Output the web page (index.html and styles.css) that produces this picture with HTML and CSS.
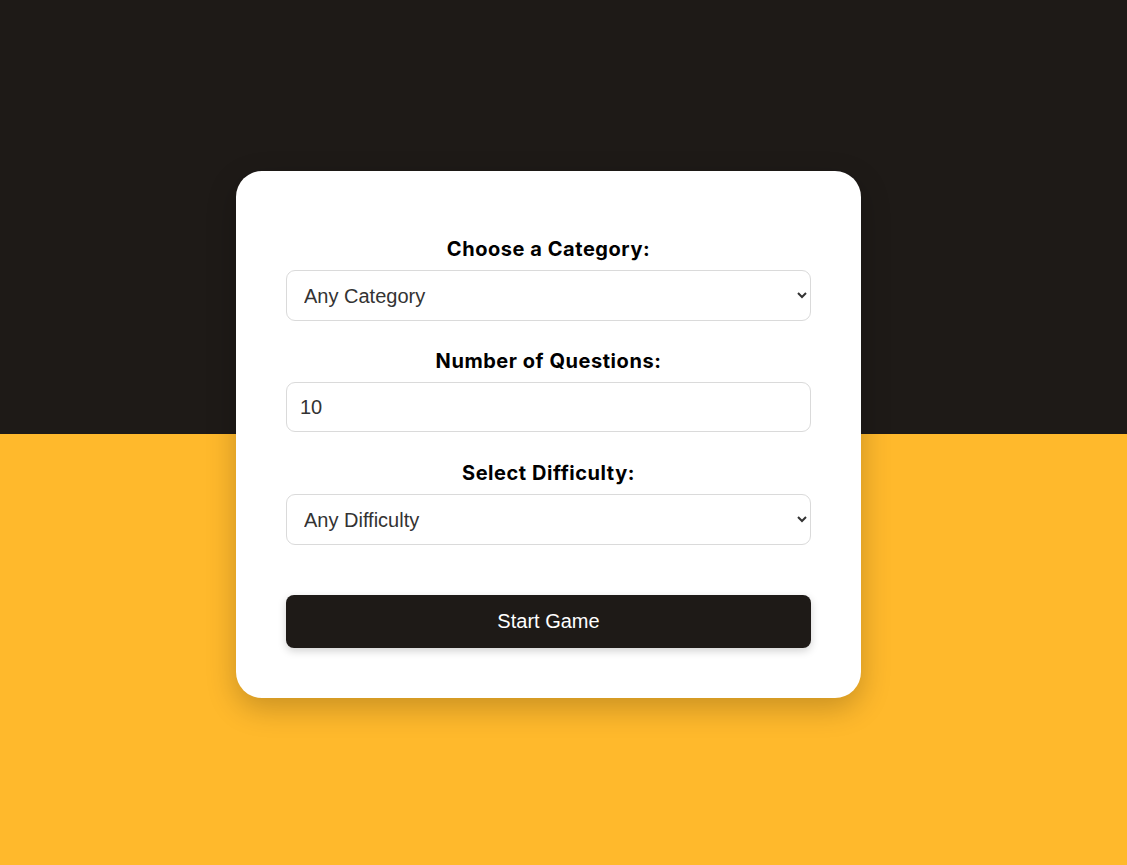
FILE: index.html
```html
<!DOCTYPE html>
<html lang="en">
<head>
<meta charset="utf-8">
<title>Quiz Setup</title>
<link rel="stylesheet" href="styles.css">
</head>
<body>
<div class="page">
  <div class="bg-top"></div>
  <div class="bg-bottom"></div>
  <main class="card">
    <form class="setup">
      <div class="group">
        <label class="label" for="category">Choose a Category:</label>
        <select class="field select" id="category">
          <option>Any Category</option>
        </select>
      </div>
      <div class="group group-number">
        <label class="label" for="amount">Number of Questions:</label>
        <input class="field input" id="amount" type="number" value="10">
      </div>
      <div class="group group-last">
        <label class="label" for="difficulty">Select Difficulty:</label>
        <select class="field select" id="difficulty">
          <option>Any Difficulty</option>
        </select>
      </div>
      <button class="start" type="button">Start Game</button>
    </form>
  </main>
</div>
</body>
</html>
```
FILE: styles.css
```css
* { box-sizing: border-box; }
html, body { margin: 0; padding: 0; }
body {
  font-family: "Liberation Sans", Arial, sans-serif;
  width: 1127px;
  height: 865px;
  overflow: hidden;
}
.page {
  position: relative;
  width: 1127px;
  height: 865px;
  display: flex;
  flex-direction: column;
}
.bg-top { height: 434px; background: #1e1a17; }
.bg-bottom { flex: 1; background: #ffb92c; }
.card {
  position: absolute;
  left: 236px;
  top: 171px;
  width: 625px;
  background: #fff;
  border-radius: 26px;
  padding: 65px 50px 50px;
  box-shadow: 0 10px 30px rgba(0, 0, 0, 0.22);
}
.setup { display: flex; flex-direction: column; }
.group { display: flex; flex-direction: column; margin-bottom: 27px; }
.group-number { margin-bottom: 28px; }
.group-last { margin-bottom: 50px; }
.label {
  font-family: "Inter", "Noto Sans", sans-serif;
  font-weight: 700;
  font-size: 20px;
  line-height: 26px;
  letter-spacing: 0.55px;
  color: #000;
  text-align: center;
  margin-bottom: 8px;
}
.field {
  width: 525px;
  height: 51px;
  border: 1px solid #dadada;
  border-radius: 9px;
  background: #fff;
  font-family: "Liberation Sans", Arial, sans-serif;
  font-size: 20px;
  color: #333;
  outline: none;
}
.select { padding: 0 10px 0 13px; }
.input { height: 50px; padding: 0 13px; }
.start {
  width: 525px;
  height: 53px;
  border: none;
  border-radius: 8px;
  background: #1e1a17;
  color: #fff;
  font-family: "Liberation Sans", Arial, sans-serif;
  font-size: 20px;
  box-shadow: 0 3px 8px rgba(0, 0, 0, 0.18);
  cursor: pointer;
}
```
